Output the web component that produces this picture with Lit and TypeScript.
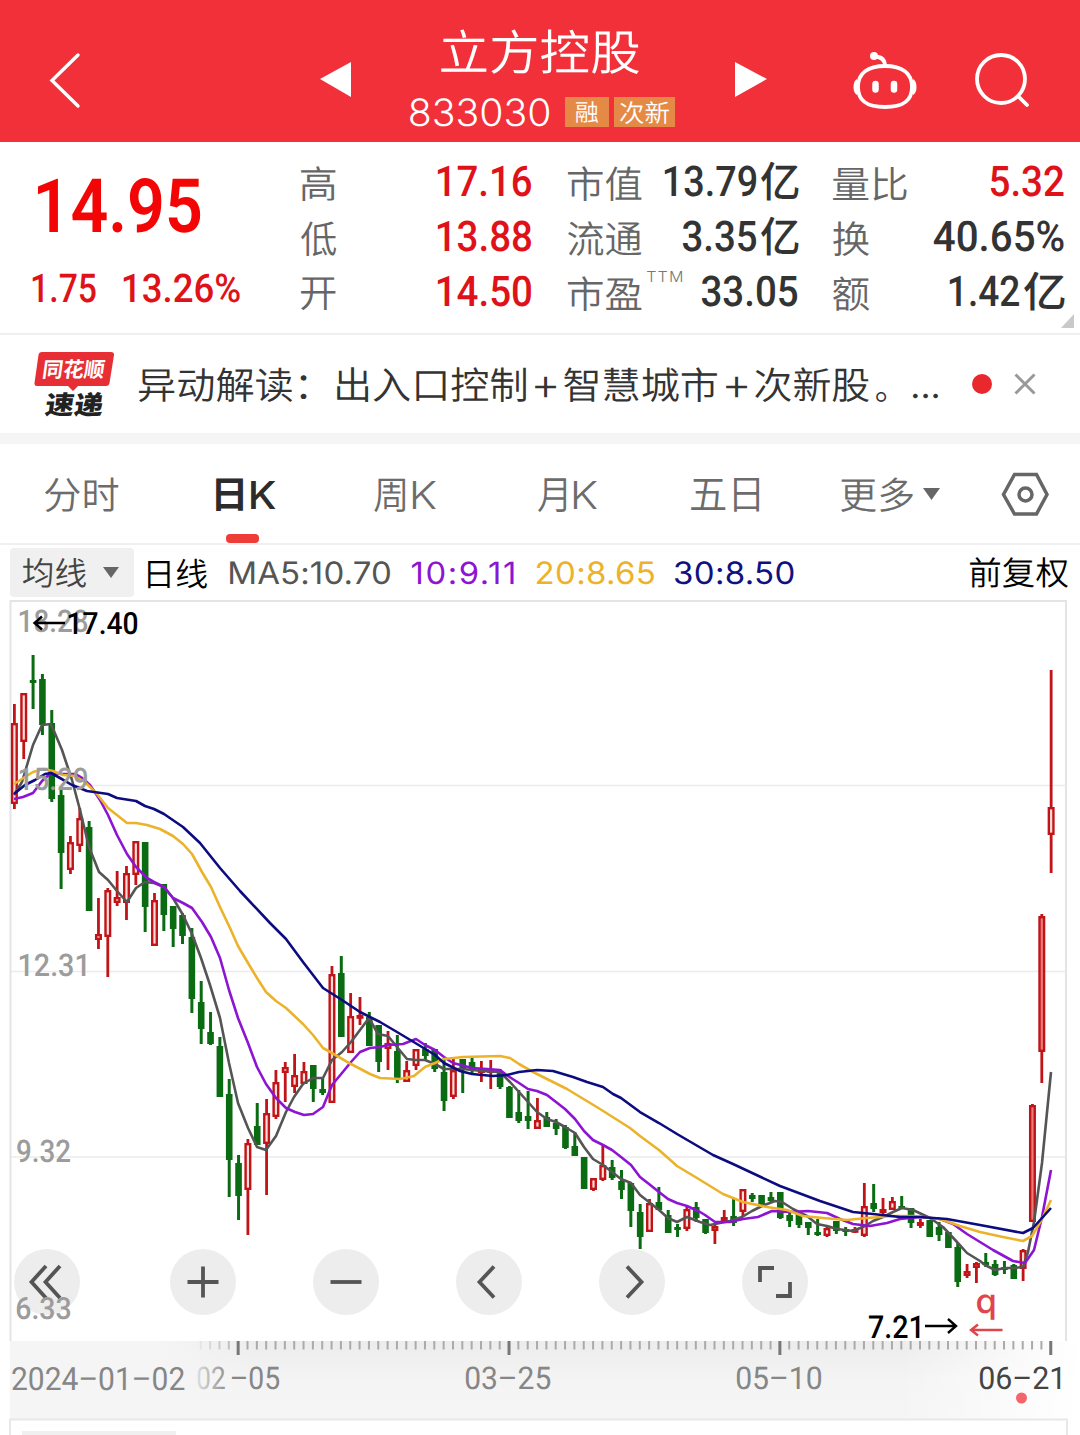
import { LitElement, html, svg, css } from "lit";
import { customElement, property } from "lit/decorators.js";

const FONTS: Record<string, string> = {
  din: 'Roboto, "Noto Sans CJK SC", sans-serif',
  ui: 'Inter, "Noto Sans CJK SC", sans-serif',
  cjk: '"Noto Sans CJK SC", sans-serif',
};

const ctx = document.createElement("canvas").getContext("2d")!;

/** Metrics that make the painted glyphs of a string fill a w × h box. */
function fit(text: string, w: number, h: number, font: string, weight: number) {
  ctx.font = `${weight} 200px ${FONTS[font]}`;
  const probe = ctx.measureText(text);
  const k = h / (probe.actualBoundingBoxAscent + probe.actualBoundingBoxDescent);
  const inkWidth = (probe.actualBoundingBoxLeft + probe.actualBoundingBoxRight) * k;
  // Digits are inset slightly so that anti-aliased edges stay inside the box.
  const inset = font === "din" ? 0.8 : 0;
  const target = w - 2 * inset;
  // Interface text that is too narrow is widened a little, then tracked out.
  const track = font === "ui" && text.length > 2 && inkWidth < target;
  const sx = track ? Math.min(1.07, target / inkWidth) : target / inkWidth;
  return {
    size: 200 * k,
    sx,
    spacing: track ? (target / sx - inkWidth) / (text.length - 1) : 0,
    dx: inset + probe.actualBoundingBoxLeft * k * sx,
    dy: probe.actualBoundingBoxAscent * k,
  };
}

function label(text: string, x: number, y: number, w: number, h: number, fill: string, weight = 500, font = "din") {
  const m = fit(text, w, h, font, weight);
  return svg`<text transform="translate(${x + m.dx} ${y + m.dy}) scale(${m.sx} 1)" font-family=${FONTS[font]}
    text-rendering="geometricPrecision" letter-spacing=${m.spacing}
    font-size=${m.size} font-weight=${weight} fill=${fill}>${text}</text>`;
}

@customElement("ink-text")
class InkText extends LitElement {
  @property() text = "";
  @property({ type: Number }) w = 10;
  @property({ type: Number }) h = 10;
  @property({ type: Number }) weight = 400;
  @property() font = "cjk";
  static styles = css`
    :host { display: block; flex: none; }
    svg { display: block; overflow: visible; }
  `;
  render() {
    return html`<svg width=${this.w} height=${this.h}>
      ${label(this.text, 0, 0, this.w, this.h, "currentColor", this.weight, this.font)}
    </svg>`;
  }
}

const t = (text: string, w: number, h: number, font = "cjk", weight = 350, cls = "") =>
  html`<ink-text class=${cls} .text=${text} .w=${w} .h=${h} .font=${font} .weight=${weight}></ink-text>`;

// Each candle: colour, high, body top, body bottom, low (plot coordinates).
type Candle = [string, number, number, number, number];
const CANDLES: Candle[] = [
  ["r",704,723,804,809],["r",693,693,742,759],["g",655,680,683,709],["g",674,679,725,735],["g",710,723,799,802],
  ["g",787,795,853,889],["r",836,842,870,874],["r",808,818,846,852],["g",821,827,911,911],["r",898,934,940,949],
  ["r",888,890,937,977],["r",871,897,903,906],["r",866,873,903,920],["r",841,841,875,885],["g",842,842,907,932],
  ["r",893,900,946,946],["g",884,884,915,931],["g",906,906,929,947],["g",913,915,936,944],["g",928,937,999,1013],
  ["g",981,1002,1029,1044],["g",1012,1032,1044,1045],["g",1037,1046,1097,1097],["g",1079,1094,1160,1197],["g",1155,1163,1196,1220],
  ["r",1139,1143,1190,1235],["g",1103,1126,1145,1145],["r",1099,1113,1144,1195],["r",1070,1082,1117,1119],["r",1062,1067,1073,1102],
  ["r",1054,1075,1087,1093],["r",1062,1071,1084,1084],["g",1065,1065,1089,1102],["g",1078,1089,1093,1095],["r",966,974,1103,1103],
  ["g",956,973,1037,1037],["r",993,1016,1053,1053],["r",997,1015,1018,1025],["g",1012,1017,1046,1046],["g",1025,1025,1062,1072],
  ["r",1031,1043,1049,1070],["g",1035,1051,1080,1083],["r",1061,1070,1082,1082],["r",1049,1049,1066,1070],["g",1043,1049,1056,1061],
  ["g",1049,1049,1069,1072],["g",1058,1072,1101,1111],["r",1059,1070,1097,1099],["g",1059,1059,1069,1093],["g",1058,1062,1070,1073],
  ["r",1061,1069,1073,1082],["r",1060,1069,1073,1089],["g",1069,1072,1087,1089],["g",1086,1087,1118,1118],["g",1090,1112,1121,1123],
  ["g",1091,1116,1121,1129],["r",1098,1120,1129,1129],["g",1112,1117,1127,1127],["g",1119,1123,1129,1135],["g",1125,1127,1148,1149],
  ["g",1132,1146,1156,1156],["g",1157,1157,1189,1189],["r",1178,1178,1190,1191],["r",1145,1165,1180,1181],["g",1160,1167,1178,1180],
  ["g",1170,1181,1190,1199],["g",1183,1183,1211,1227],["g",1204,1212,1237,1249],["r",1199,1203,1232,1232],["g",1187,1202,1210,1210],
  ["g",1210,1215,1233,1233],["g",1224,1227,1230,1237],["r",1206,1209,1229,1231],["g",1202,1207,1218,1222],["g",1219,1219,1233,1234],
  ["r",1224,1226,1231,1244],["r",1210,1217,1221,1222],["g",1199,1216,1223,1226],["r",1189,1189,1212,1217],["g",1193,1195,1199,1202],
  ["g",1195,1195,1204,1205],["g",1192,1197,1201,1202],["g",1192,1192,1218,1219],["g",1213,1215,1221,1227],["g",1213,1213,1225,1228],
  ["g",1222,1222,1228,1235],["g",1219,1232,1235,1236],["r",1227,1228,1236,1237],["g",1221,1221,1231,1234],["g",1227,1229,1232,1236],
  ["r",1227,1229,1231,1233],["r",1183,1206,1236,1237],["g",1184,1203,1209,1212],["r",1198,1209,1213,1214],["r",1197,1201,1210,1210],
  ["g",1196,1206,1208,1208],["g",1208,1208,1223,1228],["r",1219,1222,1226,1228],["g",1220,1220,1237,1237],["g",1222,1227,1235,1241],
  ["g",1232,1232,1248,1248],["g",1243,1247,1282,1287],["r",1264,1271,1276,1278],["r",1262,1263,1268,1283],["g",1253,1262,1265,1267],
  ["g",1260,1264,1275,1276],["g",1261,1267,1270,1274],["g",1264,1265,1279,1279],["r",1249,1250,1269,1281],["r",1104,1105,1222,1222],
  ["r",914,916,1052,1083],["r",670,807,835,873],
];

const LINES: { color: string; points: string }[] = [
  { color: "#555555", points: "14,795 22,782 33,745 42,725 51,724 62,750 72,780 80,810 89,847 99,872 108,880 117,891 127,902 136,888 145,882 154,883 164,887 173,898 183,915 192,934 201,958 210,985 220,1018 229,1063 238,1103 248,1128 257,1147 266,1150 276,1136 286,1112 294,1097 303,1084 313,1078 323,1078 332,1060 342,1052 351,1042 360,1030 369,1018 378,1034 388,1036 397,1047 407,1059 416,1060 425,1060 435,1064 444,1069 463,1069 482,1071 500,1072 510,1082 519,1092 528,1102 537,1112 547,1119 556,1122 565,1127 575,1133 584,1147 593,1159 603,1165 612,1172 621,1179 631,1183 640,1195 649,1202 659,1210 668,1218 677,1222 687,1217 700,1222 710,1225 720,1223 730,1221 742,1217 752,1211 762,1206 775,1201 782,1202 793,1209 807,1216 817,1224 827,1226 837,1229 853,1231 865,1226 873,1221 883,1217 893,1212 902,1208 913,1210 930,1218 943,1227 957,1242 967,1253 980,1261 985,1265 995,1270 1005,1268 1014,1268 1023,1267 1028,1252 1034,1222 1042,1163 1051,1072" },
  { color: "#8c14d2", points: "14,799 23,797 33,793 42,781 51,773 62,774 75,774 82,778 90,785 100,800 108,815 117,835 127,854 136,867 147,878 154,882 164,887 173,898 183,903 192,908 202,922 211,937 220,958 229,990 238,1018 248,1043 257,1067 266,1084 276,1098 286,1108 295,1112 304,1115 313,1114 323,1107 332,1085 342,1073 351,1062 360,1052 370,1048 380,1047 388,1045 403,1044 416,1039 425,1045 435,1050 444,1057 453,1063 472,1068 487,1069 500,1070 508,1076 519,1083 528,1089 537,1091 547,1095 556,1102 565,1109 575,1119 584,1131 593,1140 603,1145 612,1150 621,1157 631,1165 640,1177 649,1184 659,1192 668,1199 677,1203 687,1206 700,1212 705,1215 715,1222 730,1222 743,1219 758,1217 772,1211 790,1212 808,1211 827,1213 840,1219 853,1224 870,1226 887,1223 900,1219 920,1217 940,1219 953,1224 967,1234 980,1242 993,1250 1013,1261 1025,1263 1034,1250 1042,1217 1051,1170" },
  { color: "#ecb32a", points: "14,784 33,772 43,769 53,771 63,775 75,776 86,783 97,794 108,808 127,823 136,823 147,825 160,829 173,836 183,844 192,854 202,872 211,887 220,907 230,928 238,946 248,963 257,978 266,992 276,1001 286,1008 303,1024 313,1035 323,1048 332,1053 351,1064 370,1074 380,1078 400,1079 414,1076 425,1067 435,1063 444,1059 463,1057 500,1056 510,1058 519,1064 533,1072 547,1079 567,1089 600,1109 630,1128 640,1136 659,1150 677,1166 697,1178 723,1194 743,1202 767,1207 787,1210 803,1216 823,1218 847,1220 867,1218 893,1216 913,1216 940,1219 960,1226 980,1232 1003,1237 1023,1241 1032,1236 1042,1219 1051,1200" },
  { color: "#0c0c80", points: "14,794 25,785 35,780 45,774 51,773 60,778 72,785 87,791 108,794 117,798 136,801 145,806 154,809 164,814 183,827 200,843 220,868 240,891 270,923 286,939 303,962 323,988 342,1000 360,1012 380,1022 397,1032 417,1044 435,1055 444,1063 460,1071 472,1074 493,1076 507,1075 519,1072 537,1070 553,1071 573,1077 587,1082 603,1087 613,1094 621,1098 640,1112 659,1123 677,1134 713,1155 733,1164 780,1186 820,1201 853,1212 873,1214 900,1217 920,1217 947,1219 980,1225 1023,1233 1033,1228 1042,1218 1051,1208" },
];

const STEP = 9.34;
const cx = (i: number) => 14.4 + i * STEP;

@customElement("kline-chart")
class KlineChart extends LitElement {
  static styles = css`
    :host { display: block; height: 835px; }
    .plot { display: block; }
  `;
  private candle([c, hi, top, bot, lo]: Candle, i: number) {
    const x = cx(i);
    if (c === "g") {
      return svg`<path d="M${x} ${hi}V${lo}" stroke="#0b6b12" stroke-width="3"/>
        <rect x=${x - 3.3} y=${top} width="6.6" height=${Math.max(2, bot - top)} fill="#0b6b12"/>`;
    }
    return svg`<path d="M${x} ${hi}V${top}M${x} ${bot}V${lo}" stroke="#c01418" stroke-width="2.8"/>
      <rect x=${x - 2.3} y=${top + 1.2} width="4.6" height=${Math.max(1.4, bot - top - 2.4)}
        fill=${i >= 109 && i < 111 ? "#e87c78" : "#ffdcd8"} stroke="#c01418" stroke-width="2.4"/>`;
  }
  private tick(i: number) {
    const major = (i - 24) % 29 === 0;
    const x = cx(i) - 0.4;
    return svg`<path d="M${x} 1341V${major ? 1355 : 1349.5}" stroke=${major ? "#777" : "#aaa"}
      stroke-width=${major ? 3 : 2} opacity=${i < 24 ? (i - 19) / 6 : 1}/>`;
  }
  render() {
    const ticks = Array.from({ length: 92 }, (_, k) => k + 20);
    return html`<svg class="plot" width="1080" height="835" viewBox="0 600 1080 835">
      <defs>
        <linearGradient id="axis" x1="0" x2="0" y1="0" y2="1">
          <stop offset="0" stop-color="#ececec"/><stop offset=".5" stop-color="#f4f4f4"/><stop offset="1" stop-color="#f5f5f5"/>
        </linearGradient>
        <linearGradient id="left" x1="0" x2="1" y1="0" y2="0">
          <stop offset="0" stop-color="#f5f5f5"/><stop offset=".6" stop-color="#f5f5f5"/><stop offset="1" stop-color="#f5f5f5" stop-opacity="0"/>
        </linearGradient>
        <linearGradient id="right" x1="0" x2="1" y1="0" y2="0">
          <stop offset="0" stop-color="#fff" stop-opacity="0"/><stop offset="1" stop-color="#fff"/>
        </linearGradient>
        <linearGradient id="fade" gradientUnits="userSpaceOnUse" x1="0" x2="40" y1="0" y2="0">
          <stop offset="0" stop-color="#888" stop-opacity=".2"/><stop offset="1" stop-color="#888"/>
        </linearGradient>
      </defs>
      <path d="M11 785.5H1066M11 971.5H1066M11 1157H1066" stroke="#ececec" stroke-width="1.6" fill="none"/>
      <path d="M10.5 1341V601H1066V1341" stroke="#e4e4e4" stroke-width="2" fill="none"/>
      ${CANDLES.map((c, i) => this.candle(c, i))}
      ${LINES.map((l) => svg`<polyline points=${l.points} fill="none" stroke=${l.color} stroke-width="2.6" stroke-linejoin="round"/>`)}
      ${label("18.28", 19, 609, 69, 23, "#9c9c9c", 500)}
      ${label("15.29", 19, 767, 69, 23, "#9c9c9c", 500)}
      ${label("12.31", 19, 953, 67, 23, "#9c9c9c", 500)}
      ${label("9.32", 16.5, 1139, 54.5, 23, "#9c9c9c", 500)}
      <path d="M65 623H35M42 616.5L34.5 623L42 629.5" stroke="#000" stroke-width="2.4" fill="none"/>
      ${label("17.40", 68, 612, 70, 22.5, "#000", 500)}

      ${label("7.21", 868, 1315, 52, 23, "#000", 500)}
      <path d="M925 1326H955M948 1319L956 1326L948 1333" stroke="#000" stroke-width="2.4" fill="none"/>
      ${label("q", 977, 1294.5, 17.5, 25.5, "#e0444c", 500, "ui")}
      <path d="M1002.5 1330H972M978 1324.5L971 1330L978 1335.5" stroke="#e0444c" stroke-width="2.4" fill="none"/>

      <rect x="10" y="1341" width="1070" height="79" fill="url(#axis)"/>
      <rect x="10" y="1341" width="250" height="79" fill="url(#left)"/>
      <rect x="900" y="1341" width="180" height="79" fill="url(#right)"/>
      ${ticks.map((i) => this.tick(i))}
      ${label("2024–01–02", 11.5, 1366.5, 173.5, 23.5, "#868686", 450)}
      ${label("02", 197, 1366.5, 28.5, 23, "url(#fade)", 450)}
      ${label("–05", 231, 1366.5, 49, 23, "#868686", 450)}
      ${label("03–25", 465, 1366.5, 86, 23, "#868686", 450)}
      ${label("05–10", 736, 1366.5, 86, 23, "#868686", 450)}
      ${label("06–21", 979, 1366.5, 82, 23, "#444", 450)}
      <circle cx="1021.5" cy="1398" r="5.5" fill="#f2666c"/>
      <rect x="10" y="1419.5" width="1057" height="20" fill="#fff" stroke="#e8e8e8" stroke-width="2"/>
      <rect x="22" y="1431" width="154" height="4" fill="#f0f0f0"/>
    </svg>`;
  }
}

const TOOLS: { name: string; d: string }[] = [
  { name: "rewind", d: "M32 17L17.5 33L32 49M46 17L31.5 33L46 49" },
  { name: "zoom in", d: "M17.5 33H48.5M33 17.5V48.5" },
  { name: "zoom out", d: "M17.5 33H48.5" },
  { name: "previous", d: "M38 17.5L23.5 33L38 48.5" },
  { name: "next", d: "M28 17.5L42.5 33L28 48.5" },
  { name: "full screen", d: "M18 33V19H32M34 47H48V33" },
];

@customElement("app-root")
class AppRoot extends LitElement {
  static styles = css`
    :host { display: block; width: 1080px; height: 1435px; overflow: hidden; background: #fff; color: #333; }
    svg { display: block; flex: none; }
    .header { display: flex; align-items: flex-start; height: 142px; background: #f2303a; color: #fff; }
    .back { margin: 52px 0 0 48px; }
    .prev { margin: 61px 0 0 239px; }
    .title { display: flex; flex-direction: column; width: 266px; margin: 29px 59px 0 58px; }
    .name { margin-left: 31px; }
    .code { display: flex; align-items: center; margin-top: 23px; height: 30px; }
    .tag { display: flex; align-items: center; justify-content: center; height: 30px; background: #e58a46; }
    .tag.one { width: 44px; margin-left: 16px; }
    .tag.two { width: 61px; margin-left: 5px; }
    .next { margin-top: 61px; }
    .robot { margin: 50px 0 0 84px; }
    .search { margin: 51px 0 0 56px; }

    .quote { display: flex; position: relative; height: 193px; box-sizing: border-box; border-bottom: 2px solid #efefef; }
    .price { width: 301px; padding: 36px 0 0 32px; box-sizing: border-box; color: #f40505; }
    .big { margin-left: 5px; }
    .change { display: flex; gap: 26px; margin-top: 40px; color: #df1219; }
    .col { display: flex; flex-direction: column; padding-top: 11px; }
    .c1 { width: 231px; }
    .c2 { width: 230px; margin-left: 36px; }
    .c3 { width: 231px; margin-left: 35px; }
    .row { display: flex; align-items: center; height: 55px; }
    .name-l { margin-top: 6px; color: #666; }
    .ttm { margin: 0 0 28px 5px; color: #777; }
    .val { display: flex; align-items: center; gap: 4px; margin-left: auto; }
    .yi { margin-top: 2px; }
    .red { color: #df1219; }
    .corner { position: absolute; right: 6px; bottom: 5px; }

    .news { display: flex; align-items: center; height: 98px; border-bottom: 11px solid #f5f5f5; }
    .logo { display: flex; flex-direction: column; align-items: center; width: 80px; height: 67px; margin: 2px 0 0 34px; position: relative; }
    .bubble { position: absolute; left: 0; top: 0; }
    .logo-a { transform: skewX(-8deg); margin-top: 7px; color: #fff; z-index: 1; }
    .logo-b { transform: skewX(-8deg); margin-top: 13px; color: #222; }
    .n1 { margin-left: 25px; }
    .n2 { margin-left: 30.5px; }
    .plus { margin: 4px 8px 0 9px; }
    .stop { align-self: flex-end; margin: 0 0 31px 7px; }
    .dots { align-self: flex-end; margin: 0 0 35px 27px; }
    .dot { width: 20px; height: 20px; border-radius: 50%; background: #e8282c; margin-left: 33.5px; }
    .close { margin-left: 22px; }

    .tabs { display: flex; align-items: center; height: 99px; color: #6c6c6c; border-bottom: 2px solid #f0f0f0; }
    .tab { display: flex; align-items: center; gap: 8px; height: 100%; padding-top: 2px; box-sizing: border-box; }
    .active { position: relative; color: #2c2c2c; }
    .active::after { content: ""; position: absolute; left: 10px; bottom: 0; width: 33px; height: 9px; border-radius: 4px; background: #ee3c37; }

    .ind { display: flex; align-items: center; height: 55px; box-sizing: border-box; }
    .chip { display: flex; align-items: center; width: 124px; height: 49px; margin: 0 14px 0 10px; padding-left: 13px; box-sizing: border-box; gap: 17px; background: #f0f0f0; border-radius: 4px; color: #444; }
    .black { color: #000; }
    .ma5 { color: #555; margin-left: 23px; }
    .ma10 { color: #8c14d2; margin-left: 22px; }
    .ma20 { color: #ecb32a; margin-left: 23px; }
    .ma30 { color: #10107f; margin-left: 21px; }
    .adj { color: #000; margin-left: auto; margin-right: 12px; }

    .chart { position: relative; }
    .tools { position: absolute; left: 14px; top: 649px; display: flex; gap: 77px; }
    .tool { width: 66px; height: 66px; border-radius: 50%; background: #ededed; }
    .tool:first-child { margin-right: 13px; }
    .floor { position: absolute; left: 16px; top: 697px; color: #9c9c9c; }
  `;

  private quoteRow(name: unknown, value: unknown) {
    return html`<div class="row">${name}<div class="val">${value}</div></div>`;
  }

  private tab(left: number, body: unknown, active = false) {
    return html`<div class="tab ${active ? "active" : ""}" style="margin-left:${left}px">${body}</div>`;
  }

  render() {
    return html`
      <div class="header">
        <svg class="back" width="33" height="57"><path d="M30 3L4 28.500L30 54" fill="none" stroke="#fff" stroke-width="3.400" stroke-linecap="round"/></svg>
        <svg class="prev" width="32" height="36"><path d="M0 18L31 1V36Z" fill="#fff"/></svg>
        <div class="title">
          ${t("立方控股", 198, 45, "cjk", 350, "name")}
          <div class="code">
            ${t("833030", 139, 28, "ui", 350)}
            <div class="tag one">${t("融", 22, 22)}</div>
            <div class="tag two">${t("次新", 49, 23)}</div>
          </div>
        </div>
        <svg class="next" width="33" height="36"><path d="M0 1L32 18L0 36Z" fill="#fff"/></svg>
        <svg class="robot" width="66" height="60" fill="none" stroke="#fff" stroke-width="3.800">
          <path d="M33 16C50 16 60 23 60 37C60 51 51 57 33 57C15 57 6 51 6 37C6 23 16 16 33 16Z"/>
          <path d="M33 16C33 9 29 6.500 22 6.500"/>
          <circle cx="22" cy="6" r="4" fill="#fff" stroke="none"/>
          <path d="M5 29Q1.500 31 1.500 37Q1.500 43 5 45ZM61 29Q64.500 31 64.500 37Q64.500 43 61 45Z" fill="#fff" stroke="none"/>
          <path d="M23.500 34V39.500M42 34V39.500" stroke-width="6.500" stroke-linecap="round"/>
        </svg>
        <svg class="search" width="58" height="60" fill="none" stroke="#fff" stroke-width="3.800">
          <circle cx="27" cy="28" r="24"/><path d="M44 45L53 54" stroke-linecap="round"/>
        </svg>
      </div>

      <div class="quote">
        <div class="price">
          ${t("14.95", 164, 55, "din", 600, "big")}
          <div class="change">${t("1.75", 64.5, 29, "din", 500)}${t("13.26%", 117.5, 29, "din", 500)}</div>
        </div>
        <div class="col c1">
          ${this.quoteRow(t("高", 34.5, 35, "cjk", 350, "name-l"), t("17.16", 95, 31, "din", 500, "red"))}
          ${this.quoteRow(t("低", 35, 35, "cjk", 350, "name-l"), t("13.88", 95, 31, "din", 500, "red"))}
          ${this.quoteRow(t("开", 34.5, 33, "cjk", 350, "name-l"), t("14.50", 95, 31, "din", 500, "red"))}
        </div>
        <div class="col c2">
          ${this.quoteRow(t("市值", 73.5, 35, "cjk", 350, "name-l"), [t("13.79", 93, 31, "din", 500), t("亿", 37.5, 39, "cjk", 500, "yi")])}
          ${this.quoteRow(t("流通", 73.5, 35, "cjk", 350, "name-l"), [t("3.35", 75, 31, "din", 500), t("亿", 37.5, 39, "cjk", 500, "yi")])}
          ${this.quoteRow([t("市盈", 73.5, 35, "cjk", 350, "name-l"), t("TTM", 35, 11, "ui", 350, "ttm")], t("33.05", 97, 31, "din", 500))}
        </div>
        <div class="col c3">
          ${this.quoteRow(t("量比", 73.5, 34, "cjk", 350, "name-l"), t("5.32", 74.5, 31, "din", 500, "red"))}
          ${this.quoteRow(t("换", 36, 35, "cjk", 350, "name-l"), t("40.65%", 131.5, 31, "din", 500))}
          ${this.quoteRow(t("额", 36, 35, "cjk", 350, "name-l"), [t("1.42", 71, 31, "din", 500), t("亿", 40.5, 39, "cjk", 500, "yi")])}
        </div>
        <svg class="corner" width="13" height="14"><path d="M13 0V14H0Z" fill="#c9c9c9"/></svg>
      </div>

      <div class="news">
        <div class="logo">
          <svg class="bubble" width="80" height="39"><path d="M8 0H77Q80.500 0 80 3L75.500 31Q75 34 72 34H44L39 39L34 34H3Q0 34 .500 31L4.500 3Q5 0 8 0Z" fill="#e62e34"/></svg>
          ${t("同花顺", 60, 20, "cjk", 700, "logo-a")}
          ${t("速递", 57, 25, "cjk", 900, "logo-b")}
        </div>
        ${t("异动解读：", 167.5, 35, "cjk", 350, "n1")}
        ${t("出入口控制", 189, 35, "cjk", 350, "n2")}
        ${t("+", 21, 21, "ui", 350, "plus")}
        ${t("智慧城市", 153, 35, "cjk", 350)}
        ${t("+", 21, 21, "ui", 350, "plus")}
        ${t("次新股", 114, 35, "cjk", 350)}
        ${t("。", 10, 10, "cjk", 350, "stop")}
        ${t("...", 25, 4.5, "ui", 400, "dots")}
        <div class="dot"></div>
        <svg class="close" width="22" height="22"><path d="M1.500 1.500L20.500 20.500M20.500 1.500L1.500 20.500" stroke="#999" stroke-width="3"/></svg>
      </div>

      <div class="tabs">
        ${this.tab(45, t("分时", 73, 35))}
        ${this.tab(98, [t("日", 27, 33, "cjk", 600), t("K", 24.5, 28, "ui", 500)], true)}
        ${this.tab(98.5, [t("周", 31, 34), t("K", 23, 28, "ui", 350)])}
        ${this.tab(102, [t("月", 28, 34), t("K", 23, 28, "ui", 350)])}
        ${this.tab(94, t("五日", 68, 34))}
        ${this.tab(82, t("更多", 72, 35))}
        <svg style="margin-left:10px" width="17" height="12"><path d="M0 0H17L8.500 12Z" fill="#666"/></svg>
        <svg style="margin-left:61px" width="48" height="44" fill="none" stroke="#666" stroke-width="3.500"><path d="M13.500 2.500H35.500L46 22.500L35.500 42H13.500L2.500 22.500Z"/><circle cx="24.500" cy="22.500" r="6.500"/></svg>
      </div>

      <div class="ind">
        <div class="chip">${t("均线", 63, 30)}<svg width="16" height="11"><path d="M0 0H16L8 11Z" fill="#666"/></svg></div>
        ${t("日线", 59, 30, "cjk", 350, "black")}
        ${t("MA5:10.70", 160, 23, "ui", 380, "ma5")}
        ${t("10:9.11", 101.5, 23, "ui", 380, "ma10")}
        ${t("20:8.65", 117, 23, "ui", 380, "ma20")}
        ${t("30:8.50", 118.5, 23, "ui", 380, "ma30")}
        ${t("前复权", 98, 31, "cjk", 350, "adj")}
      </div>

      <div class="chart">
        <kline-chart></kline-chart>
        <div class="tools">
          ${TOOLS.map((b) => html`<div class="tool" role="button" aria-label=${b.name}>
            <svg width="66" height="66"><path d=${b.d} fill="none" stroke="#555" stroke-width="3.800"/></svg>
          </div>`)}
        </div>
        ${t("6.33", 55, 22.5, "din", 500, "floor")}
      </div>
    `;
  }
}
